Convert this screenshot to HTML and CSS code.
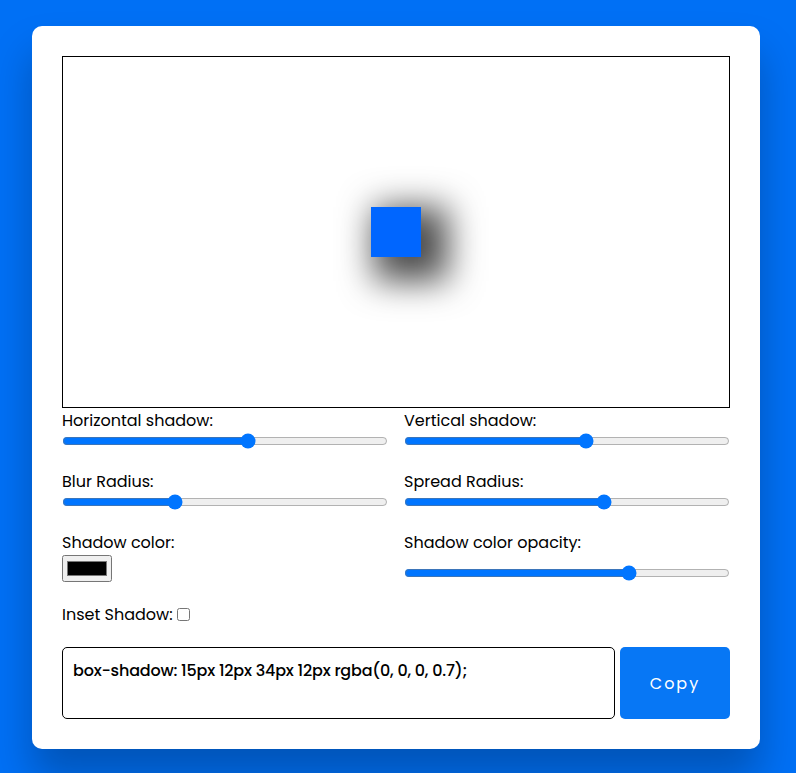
FILE: index.html
```html
<!DOCTYPE html>
<html lang="en">
<head>
<meta charset="utf-8">
<title>Box Shadow Generator</title>
<link rel="stylesheet" href="styles.css">
</head>
<body>
<div class="card">
  <div class="preview">
    <div class="element"></div>
  </div>
  <div class="controls">
    <div class="control">
      <label for="h-shadow">Horizontal shadow:</label>
      <input type="range" id="h-shadow" min="-100" max="100" value="15">
    </div>
    <div class="control">
      <label for="v-shadow">Vertical shadow:</label>
      <input type="range" id="v-shadow" min="-100" max="100" value="12">
    </div>
    <div class="control">
      <label for="blur">Blur Radius:</label>
      <input type="range" id="blur" min="0" max="100" value="34">
    </div>
    <div class="control">
      <label for="spread">Spread Radius:</label>
      <input type="range" id="spread" min="-50" max="50" value="12">
    </div>
    <div class="control">
      <label for="color">Shadow color:</label>
      <input type="color" id="color" value="#000000">
    </div>
    <div class="control">
      <label for="opacity">Shadow color opacity:</label>
      <input type="range" id="opacity" min="0" max="1" step="0.1" value="0.7">
    </div>
    <div class="control inset">
      <label for="inset">Inset Shadow:</label><input type="checkbox" id="inset">
    </div>
  </div>
  <div class="result">
    <textarea class="code" rows="3">box-shadow: 15px 12px 34px 12px rgba(0, 0, 0, 0.7);</textarea>
    <button class="copy" type="button">Copy</button>
  </div>
</div>
</body>
</html>
```

FILE: styles.css
```css
* {
  box-sizing: border-box;
}

html, body {
  height: 100%;
}

body {
  margin: 0;
  padding: 26px 0 0 32px;
  background: #0070f5;
  font-family: "Poppins", "Open Sans", "Liberation Sans", sans-serif;
  color: #000;
  overflow: hidden;
}

.card {
  width: 728px;
  background: #fff;
  border-radius: 10px;
  padding: 30px;
  box-shadow: 0 28px 40px rgba(0, 0, 0, 0.25);
}

.preview {
  height: 352px;
  border: 1px solid #000;
  display: flex;
  align-items: center;
  justify-content: center;
}

.element {
  width: 50px;
  height: 50px;
  background: #0066ff;
  box-shadow: 15px 12px 34px 12px rgba(0, 0, 0, 0.7);
}

.controls {
  display: grid;
  grid-template-columns: 326px 326px;
  column-gap: 16px;
  row-gap: 20px;
  padding-top: 1px;
}

.control {
  display: flex;
  flex-direction: column;
  justify-content: space-between;
  align-items: flex-start;
}

.control label {
  font-size: 16px;
  line-height: 24px;
}

.control input[type="range"] {
  width: 100%;
  height: 16px;
  margin: 0 0 1px;
}

.control input[type="color"] {
  margin: 0;
  width: 50px;
  height: 27px;
}

.control.inset {
  grid-column: 1 / -1;
  flex-direction: row;
  align-items: center;
  justify-content: flex-start;
  margin-top: 1px;
}

.control.inset input {
  margin: 0 0 1px 4px;
  width: 13px;
  height: 13px;
}

.result {
  display: flex;
  gap: 5px;
  margin-top: 20px;
}

.code {
  width: 553px;
  height: 72px;
  border: 1px solid #000;
  border-radius: 5px;
  padding: 11px 10px;
  resize: none;
  font-family: "Poppins", "Open Sans", "Liberation Sans", sans-serif;
  font-size: 16px;
  font-weight: 500;
  line-height: 24px;
  letter-spacing: -0.2px;
  color: #000;
}

.copy {
  width: 110px;
  height: 72px;
  border: none;
  border-radius: 5px;
  background: #0777f5;
  color: #fff;
  font-family: "Poppins", "Open Sans", "Liberation Sans", sans-serif;
  font-size: 16px;
  letter-spacing: 2px;
  cursor: pointer;
}
```
